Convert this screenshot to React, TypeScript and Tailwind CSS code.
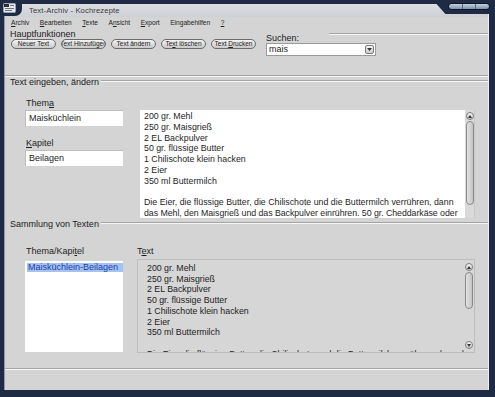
import React from "react";

function Groove({ className = "" }: { className?: string }) {
  return <div className={`h-[2px] border-t border-t-[#a4a4a4] border-b border-b-[#f6f6f6] ${className}`} />;
}

function Arrow({ down = false }: { down?: boolean }) {
  return (
    <div className="w-[8px] h-[8px] rounded-full border border-[#7c7c7c] bg-gradient-to-b from-[#f4f4f4] to-[#cfcfcf] flex items-center justify-center">
      <svg width="4" height="3" viewBox="0 0 4 3">
        <path d={down ? "M0 0 L4 0 L2 3Z" : "M0 3 L4 3 L2 0Z"} fill="#333" />
      </svg>
    </div>
  );
}

function Btn({ children }: { children: React.ReactNode }) {
  return (
    <div className="w-[45px] h-[10px] shrink-0 rounded-full border border-[#6a6a6a] bg-gradient-to-b from-[#f3f3f3] to-[#c9c9c9] text-[6.5px] leading-none text-[#222] flex items-center justify-center overflow-hidden whitespace-nowrap">
      <span className="whitespace-pre">{children}</span>
    </div>
  );
}

const recipe = [
  "200 gr. Mehl",
  "250 gr. Maisgrieß",
  "2 EL Backpulver",
  "50 gr. flüssige Butter",
  "1 Chilischote klein hacken",
  "2 Eier",
  "350 ml Buttermilch",
  "\u00a0",
];

export default function App() {
  return (
    <div className="relative w-[495px] h-[397px] bg-[#1f2b45] pt-[4px] pl-[4px] pr-[6px] pb-[7px] flex font-['Liberation_Sans',Arial,sans-serif] text-[#1e1e1e] overflow-hidden">
      {/* window chrome: top-left corner with icon */}
      <div className="absolute left-0 top-0 w-[22px] h-[16px] bg-[#1f2b45] rounded-br-[7px] z-10 flex items-start pl-[3px] pt-[2px]">
        <svg width="13" height="11" viewBox="0 0 13 11">
          <rect x="0.5" y="1.5" width="12" height="9" rx="1" fill="#e6e8ec" stroke="#9aa3b3" />
          <rect x="1" y="2" width="5" height="3" fill="#2b2f3a" />
          <rect x="7" y="3" width="4" height="1" fill="#6c7484" />
          <rect x="2" y="6" width="9" height="1" fill="#6c7484" />
          <rect x="2" y="8" width="7" height="1" fill="#6c7484" />
        </svg>
      </div>
      {/* window chrome: top-right tab with buttons */}
      <div className="absolute right-0 top-0 w-[62px] h-[14px] bg-[#1f2b45] z-10 [clip-path:polygon(0_0,100%_0,100%_100%,20%_100%)] flex items-start justify-end pr-[5px] pt-[3px]">
        <div className="w-[42px] h-[7px] rounded-full border border-[#0f1626] bg-gradient-to-b from-[#c4d0e0] to-[#7f93b0] flex overflow-hidden">
          <div className="flex-1 border-r border-[#55667f]" />
          <div className="flex-1 border-r border-[#55667f]" />
          <div className="flex-1" />
        </div>
      </div>

      <div className="flex-1 flex flex-col bg-[#d4d4d4] border-l border-l-[#8e98aa] border-r border-r-[#f0f0f0]">
        {/* title row */}
        <div className="h-[13px] shrink-0 bg-gradient-to-b from-[#dcdee2] to-[#cdd0d4] pl-[24px] flex items-center text-[7.6px] tracking-[0.15px] text-[#3a3a3a]">
          Text-Archiv - Kochrezepte
        </div>
        {/* menu row */}
        <div className="h-[11px] shrink-0 flex items-center gap-[10.5px] pl-[6px] text-[6.6px] text-[#222]">
          <span><u>A</u>rchiv</span>
          <span><u>B</u>earbeiten</span>
          <span><u>T</u>exte</span>
          <span>A<u>n</u>sicht</span>
          <span><u>E</u>xport</span>
          <span>Ein<u>g</u>abehilfen</span>
          <span><u>?</u></span>
        </div>
        {/* Hauptfunktionen */}
        <div className="h-[47px] shrink-0 flex pl-[5px]">
          <div className="flex flex-col pt-[1px]">
            <div className="h-[10px] text-[9px] leading-[10px] text-[#222]">Hauptfunktionen</div>
            <div className="flex gap-[5px] ml-[1px]">
              <Btn>Neuer Text</Btn>
              <Btn>Text Hinzufügen</Btn>
              <Btn>Text ändern</Btn>
              <Btn>Te<u>x</u>t löschen</Btn>
              <Btn>Text <u>D</u>rucken</Btn>
            </div>
          </div>
          <div className="ml-[10px] flex-1 flex flex-col pt-[5px]">
            <div className="flex items-start">
              <div className="h-[10px] text-[9px] leading-[10px] text-[#222]">Suchen:</div>
              <Groove className="flex-1 ml-[30px]" />
            </div>
            <div className="w-[110px] h-[13px] bg-white border border-[#9a9a9a] flex items-center pl-[2px] pr-[1px] text-[9px]">
              <span className="flex-1">mais</span>
              <div className="w-[9px] h-[9px] rounded-[2px] border border-[#7a7a7a] bg-gradient-to-b from-[#f3f3f3] to-[#cdcdcd] flex items-center justify-center">
                <svg width="5" height="3" viewBox="0 0 5 3">
                  <path d="M0 0 L5 0 L2.5 3Z" fill="#333" />
                </svg>
              </div>
            </div>
          </div>
        </div>
        <Groove />
        {/* Text eingeben header */}
        <div className="h-[10px] shrink-0 flex items-start pl-[5px]">
          <div className="text-[9px] leading-[10px] text-[#222] whitespace-nowrap">Text eingeben, ändern</div>
          <Groove className="flex-1 ml-[2px] mt-[3px]" />
        </div>
        {/* Text eingeben content */}
        <div className="h-[132px] shrink-0 flex pl-[20px]">
          <div className="w-[98px] flex flex-col pt-[11px]">
            <div className="h-[10px] text-[9px] leading-[10px] pl-[1px]">Them<u>a</u></div>
            <div className="mt-[2px] h-[16px] bg-white border-t border-l border-[#bdbdbd] flex items-center pl-[3px] text-[9px]">Maisküchlein</div>
            <div className="mt-[12px] h-[10px] text-[9px] leading-[10px] pl-[1px]"><u>K</u>apitel</div>
            <div className="mt-[2px] h-[16px] bg-white border-t border-l border-[#bdbdbd] flex items-center pl-[3px] text-[9px]">Beilagen</div>
          </div>
          <div className="ml-[17px] mt-[23px] h-[108px] w-[335px] bg-white flex border-r border-[#c8c8c8]">
            <div className="flex-1 pl-[4px] pt-[1px] text-[8.8px] leading-[10.8px] overflow-hidden whitespace-nowrap">
              {recipe.map((l, i) => (
                <div key={i}>{l}</div>
              ))}
              <div>Die Eier, die flüssige Butter, die Chilischote und die Buttermilch verrühren, dann</div>
              <div className="tracking-[-0.05px]">das Mehl, den Maisgrieß und das Backpulver einrühren. 50 gr. Cheddarkäse oder</div>
            </div>
            <div className="w-[9px] bg-[#d9d9d9] flex flex-col items-center pt-[2px]">
              <Arrow />
              <div className="mt-[1px] w-[8px] h-[84px] rounded-full border border-[#8a8a8a] bg-gradient-to-r from-[#e2e2e2] to-[#c4c4c4]" />
            </div>
          </div>
        </div>
        {/* Sammlung header */}
        <div className="h-[10px] shrink-0 flex items-start pl-[5px]">
          <div className="text-[9px] leading-[10px] text-[#222] whitespace-nowrap">Sammlung von Texten</div>
          <Groove className="flex-1 ml-[2px] mt-[3px]" />
        </div>
        {/* Sammlung content */}
        <div className="h-[139px] shrink-0 flex pl-[20px]">
          <div className="w-[98px] flex flex-col pt-[17px]">
            <div className="h-[10px] text-[9px] leading-[10px] pl-[1px]">Thema/Kapi<u>t</u>el</div>
            <div className="mt-[5px] h-[91px] bg-white pt-[2px] pl-[2px]">
              <div className="h-[9px] bg-[#a5c2f3] text-[#1b3fa6] text-[9px] leading-[9px] pl-[1px] whitespace-nowrap overflow-hidden">Maisküchlein-Beilagen</div>
            </div>
          </div>
          <div className="ml-[14px] w-[338px] flex flex-col pt-[17px]">
            <div className="h-[10px] text-[9px] leading-[10px]">T<u>e</u>xt</div>
            <div className="mt-[3px] h-[94px] border border-[#bdbdbd] bg-[#d6d6d6] flex">
              <div className="flex-1 pl-[9px] pt-[3px] text-[8.8px] leading-[10.7px] overflow-hidden whitespace-nowrap text-[#222]">
                {recipe.map((l, i) => (
                  <div key={i}>{l}</div>
                ))}
                <div>Die Eier, die flüssige Butter, die Chilischote und die Buttermilch verrühren, dann das</div>
              </div>
              <div className="w-[9px] mr-[1px] flex flex-col items-center pt-[3px] pb-[3px]">
                <Arrow />
                <div className="mt-[1px] w-[8px] h-[37px] rounded-full border border-[#8a8a8a] bg-gradient-to-r from-[#e2e2e2] to-[#c4c4c4]" />
                <div className="flex-1" />
                <Arrow down />
              </div>
            </div>
          </div>
        </div>
        <Groove />
        <div className="flex-1 bg-[#d4d4d4]" />
      </div>
    </div>
  );
}
